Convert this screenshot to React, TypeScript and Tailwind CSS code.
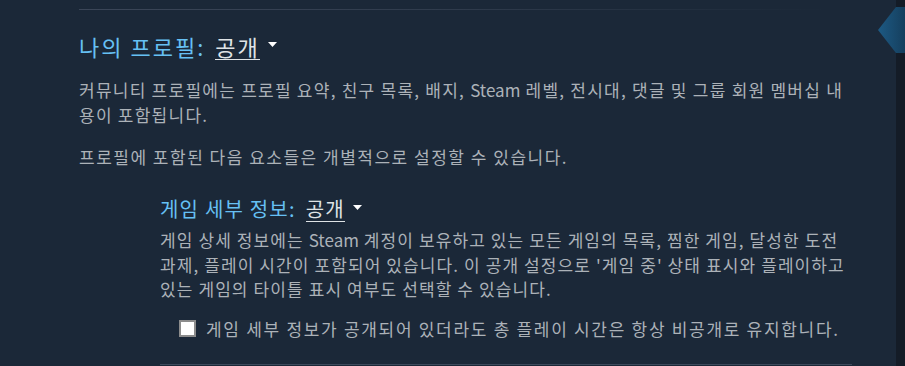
import React, { useState } from 'react';

const font = { fontFamily: '"Noto Sans CJK KR", "Noto Sans", sans-serif' };

const Caret = () => (
  <svg width="9" height="6" viewBox="0 0 9 6" className="inline-block ml-[8px] mb-[2px]">
    <path d="M0 0 L9 0 L4.5 5 Z" fill="#ffffff" />
  </svg>
);

const Steam = () => <span className="tracking-normal">Steam</span>;

export default function App() {
  const [hidePlaytime, setHidePlaytime] = useState(false);

  return (
    <div className="relative flex w-[905px] h-[366px] overflow-hidden bg-[#1b2838]" style={font}>
      <div className="flex-1 pl-[79px] pr-[44px]">
        <div className="mt-[9px] h-px w-[750px] bg-gradient-to-r from-[#3b4658] via-[#2f3b4c] to-transparent" />

        <div className="mt-[21px] flex items-center text-[22px] leading-[30px] tracking-[2px] text-[#66c0f4]">
          <span>나의 프로필:</span>
          <span className="ml-[10px] text-[#dfe3e6] border-b border-[#dfe3e6] leading-[26px]">공개</span>
          <Caret />
        </div>

        <p className="mt-[16px] text-[17px] leading-[25px] tracking-[1.25px] text-[#acb2b8] break-all">
          커뮤니티 프로필에는 프로필 요약, 친구 목록, 배지, <Steam /> 레벨, 전시대, 댓글 및 그룹 회원 멤버십 내용이 포함됩니다.
        </p>
        <p className="mt-[17px] text-[17px] leading-[25px] tracking-[1.5px] text-[#acb2b8]">
          프로필에 포함된 다음 요소들은 개별적으로 설정할 수 있습니다.
        </p>

        <div className="ml-[81px] mt-[26px]">
          <div className="flex items-center text-[20px] leading-[28px] tracking-[1.2px] text-[#66c0f4]">
            <span>게임 세부 정보:</span>
            <span className="ml-[10px] text-[#dfe3e6] border-b border-[#dfe3e6] leading-[24px]">공개</span>
            <Caret />
          </div>
          <p className="mt-[5px] text-[17px] leading-[24.5px] tracking-[1.1px] text-[#acb2b8] break-all">
            게임 상세 정보에는 <Steam /> 계정이 보유하고 있는 모든 게임의 목록, 찜한 게임, 달성한 도전 과제, 플레이 시간이 포함되어 있습니다. 이 공개 설정으로 '게임 중' 상태 표시와 플레이하고 있는 게임의 타이틀 표시 여부도 선택할 수 있습니다.
          </p>
          <label className="mt-[15px] ml-[19px] flex items-center gap-[10px] cursor-pointer text-[17px] leading-[24px] tracking-[1.7px] text-[#acb2b8]">
            <span
              onClick={() => setHidePlaytime(!hidePlaytime)}
              className="shrink-0 w-[17px] h-[17px] bg-white border-2 border-[#8c8c8c] flex items-center justify-center text-[12px] leading-none text-[#1b2838]"
            >
              {hidePlaytime ? '✓' : ''}
            </span>
            게임 세부 정보가 공개되어 있더라도 총 플레이 시간은 항상 비공개로 유지합니다.
          </label>
          <div className="mt-[23px] h-px bg-[#3d4a5c]" />
        </div>
      </div>

      <div className="w-[9px] bg-[#141c27]" />
      <div className="absolute right-0 top-[7px] w-[27px] h-[46px] bg-gradient-to-r from-[#1d5a84] to-[#153f5e] [clip-path:polygon(0_50%,18px_0,100%_0,100%_100%,18px_100%)]" />
    </div>
  );
}
